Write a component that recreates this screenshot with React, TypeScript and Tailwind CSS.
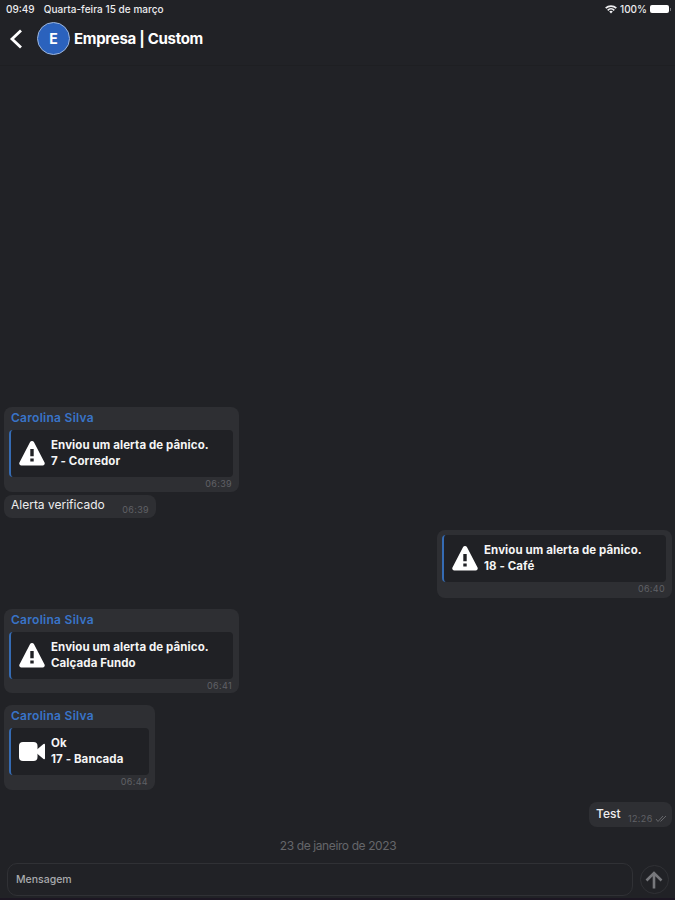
import type { ReactNode } from 'react';

type Alert = {
  icon: 'warning' | 'video';
  title: string;
  place: string;
};

type BubbleProps = {
  author?: string;
  alert: Alert;
  time: string;
  className: string;
};

function WarningIcon() {
  return (
    <svg viewBox="0 0 26 25" className="h-[25px] w-[26px]" fill="#fff">
      <path d="M11.1 1.1a2.2 2.2 0 0 1 3.8 0l10.500 20.2a2.100 2.100 0 0 1-1.900 3.2h-21a2.100 2.100 0 0 1-1.900-3.2z" />
      <path d="M11.300 8h3.400v7.300h-3.400zM11.300 17.500h3.400v3h-3.400z" fill="#202125" />
    </svg>
  );
}

function VideoIcon() {
  return (
    <svg viewBox="0 0 26 19" className="h-[19px] w-[26px]" fill="#fff">
      <rect width="18.5" height="19" rx="4" />
      <path d="M18 7.500l6.500-5.500q1.500-.8 1.500.8v13.400q0 1.600-1.500.8l-6.500-5.500z" />
    </svg>
  );
}

function WifiIcon() {
  return (
    <svg viewBox="0 0 12 9" className="h-[9px] w-3" fill="none" stroke="#f0f0f2" strokeWidth="1.7">
      <path d="M.7 3.200a7.600 7.600 0 0 1 10.600 0M2.700 5.300a4.700 4.700 0 0 1 6.600 0" />
      <path d="M4.200 6.500a2.600 2.600 0 0 1 3.600 0L6 8.600z" fill="#f0f0f2" stroke="none" />
    </svg>
  );
}

function Time({ children }: { children: ReactNode }) {
  return <span className="block text-[9px] leading-[11px] tracking-[0.35px] text-[#606166]">{children}</span>;
}

function AlertBubble({ author, alert, time, className }: BubbleProps) {
  return (
    <div className={`flex flex-col rounded-[8px] bg-[#2e2f33] pr-[6px] pl-[5px] ${className}`}>
      {author && (
        <p className="h-[23px] pt-[3px] pl-[2px] text-[12px] leading-[16px] font-semibold tracking-[0.28px] text-[#3974c8]">
          {author}
        </p>
      )}
      <div className="flex h-[47px] items-center gap-[6px] rounded-[4px] border-l-2 border-[#356bb3] bg-[#202125] pb-px pl-[8px]">
        {alert.icon === 'warning' ? <WarningIcon /> : <VideoIcon />}
        <div className="text-[11.5px] leading-[16px] font-bold tracking-[0.09px] text-[#f5f5f5]">
          <p>{alert.title}</p>
          <p>{alert.place}</p>
        </div>
      </div>
      <div className="flex justify-end pt-[1px] pr-px">
        <Time>{time}</Time>
      </div>
    </div>
  );
}

export default function App() {
  return (
    <div className="flex h-[900px] w-[675px] flex-col overflow-hidden bg-[#212226] font-['Inter','Liberation_Sans',sans-serif] whitespace-nowrap text-white">
      <div className="flex h-[18px] items-center justify-between pr-[4px] pl-[6px] text-[10px] font-medium text-[#ececef]">
        <div className="flex gap-[9px]">
          <span>09:49</span>
          <span className="tracking-[0.04px]">Quarta-feira 15 de março</span>
        </div>
        <div className="flex items-center gap-[3px]">
          <WifiIcon />
          <span>100%</span>
          <div className="flex items-center gap-px">
            <span className="h-[8px] w-[19px] rounded-[2px] bg-white" />
            <span className="h-[3px] w-px bg-[#77787c]" />
          </div>
        </div>
      </div>

      <header className="flex h-[48px] items-start border-b border-[#1e1f22] pt-[4px] pl-[9px]">
        <svg viewBox="0 0 14 20" className="mt-[7px] h-5 w-[14px]" fill="none" stroke="#fff" strokeWidth="2.8">
          <path d="M12 1.500 3 10l9 8.500" />
        </svg>
        <div className="ml-[14px] flex size-[33px] items-center justify-center rounded-full border border-[#9db6dc] bg-[#2b62bd] text-[14px] font-bold">
          E
        </div>
        <h1 className="ml-[4px] text-[15px] leading-[33px] font-bold tracking-[-0.3px]">Empresa | Custom</h1>
      </header>

      <main className="flex h-[790px] flex-col pt-[341px] pr-[3px] pl-[4px]">
        <AlertBubble
          author="Carolina Silva"
          alert={{ icon: 'warning', title: 'Enviou um alerta de pânico.', place: '7 - Corredor' }}
          time="06:39"
          className="h-[85px] w-[235px]"
        />
        <div className="mt-[3px] flex h-[23px] w-[152px] items-start justify-between rounded-[8px] bg-[#2e2f33] pr-[7px] pl-[7px]">
          <span className="pt-[2px] text-[12px] leading-[16px] text-[#ededee]">Alerta verificado</span>
          <div className="pt-[9px]">
            <Time>06:39</Time>
          </div>
        </div>
        <AlertBubble
          alert={{ icon: 'warning', title: 'Enviou um alerta de pânico.', place: '18 - Café' }}
          time="06:40"
          className="mt-[12px] h-[68px] w-[235px] self-end pt-[5px]"
        />
        <AlertBubble
          author="Carolina Silva"
          alert={{ icon: 'warning', title: 'Enviou um alerta de pânico.', place: 'Calçada Fundo' }}
          time="06:41"
          className="mt-[11px] h-[84px] w-[235px]"
        />
        <AlertBubble
          author="Carolina Silva"
          alert={{ icon: 'video', title: 'Ok', place: '17 - Bancada' }}
          time="06:44"
          className="mt-[12px] h-[85px] w-[151px]"
        />
        <div className="mt-[12px] flex h-[25px] w-[83px] items-start self-end rounded-[8px] bg-[#2e2f33] pl-[7px]">
          <span className="w-[32px] pt-[4px] text-[12px] leading-[16px] font-medium text-[#ededee]">Test</span>
          <div className="pt-[11px]">
            <Time>12:26</Time>
          </div>
          <svg viewBox="0 0 12 8" className="mt-[13px] ml-[2px] h-[8px] w-3" fill="none" stroke="#66676b">
            <path d="M1 4l2 2.500L8 1M5.500 6.500 11 1" />
          </svg>
        </div>
        <p className="mt-[10px] text-center text-[12px] leading-[17px] tracking-[-0.39px] text-[#65666a]">23 de janeiro de 2023</p>
      </main>

      <footer className="flex h-[44px] items-start gap-[7px] border-b-2 border-[#1c1622] pt-[7px] pl-[7px]">
        <div className="flex h-[33px] w-[626px] items-center rounded-[10px] border border-[#303135] pl-[8px] text-[10.5px] font-medium text-[#a9aaad]">
          Mensagem
        </div>
        <div className="mt-[2px] flex size-[29px] items-center justify-center rounded-full border border-[#303135] pr-px">
          <svg viewBox="0 0 18 18" className="size-[18px]" fill="none" stroke="#77787c" strokeWidth="2.600">
            <path d="M9 17.500V2M1.500 9.500 9 2l7.500 7.500" />
          </svg>
        </div>
      </footer>
    </div>
  );
}
